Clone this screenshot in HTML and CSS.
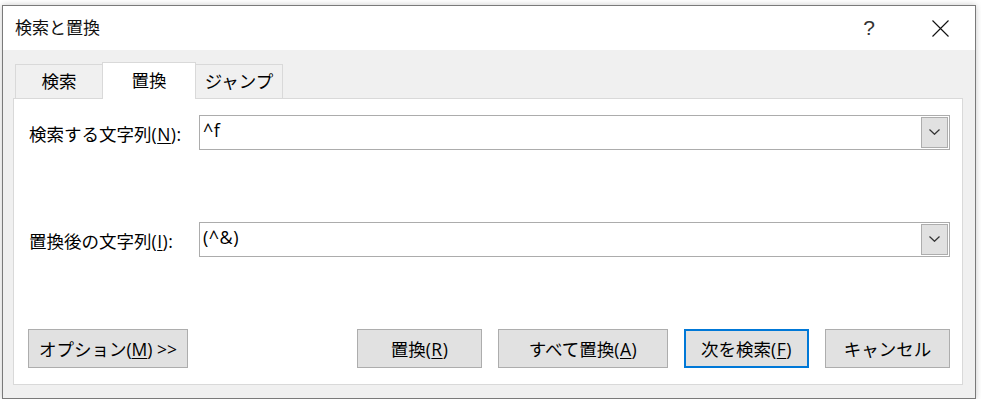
FILE: index.html
```html
<!DOCTYPE html>
<html lang="ja">
<head>
<meta charset="utf-8">
<title>検索と置換</title>
<link rel="stylesheet" href="styles.css">
</head>
<body>
<div class="window">
  <div class="titlebar">
    <span class="title">検索と置換</span>
    <span class="help">?</span>
    <span class="close"><svg width="17" height="17" viewBox="0 0 17 17"><path d="M0.5 0.5 L16.5 16.5 M16.5 0.5 L0.5 16.5" stroke="#111" stroke-width="1.1" fill="none"/></svg></span>
  </div>
  <div class="body">
    <div class="tabs">
      <div class="tab">検索</div>
      <div class="tab active">置換</div>
      <div class="tab">ジャンプ</div>
    </div>
    <div class="panel">
      <div class="row">
        <label class="label">検索する文字列<span class="lat">(<u>N</u>):</span></label>
        <div class="combo">
          <span class="value">^f</span>
          <span class="drop"><svg width="11" height="6" viewBox="0 0 11 6"><path d="M0.5 0.5 L5.5 5.3 L10.5 0.5" stroke="#333" stroke-width="1.2" fill="none"/></svg></span>
        </div>
      </div>
      <div class="row row2">
        <label class="label">置換後の文字列<span class="lat">(<u>I</u>):</span></label>
        <div class="combo">
          <span class="value">(^&amp;)</span>
          <span class="drop"><svg width="11" height="6" viewBox="0 0 11 6"><path d="M0.5 0.5 L5.5 5.3 L10.5 0.5" stroke="#333" stroke-width="1.2" fill="none"/></svg></span>
        </div>
      </div>
      <div class="buttons">
        <button class="btn opt">オプション<span class="lat">(<u>M</u>) &gt;&gt;</span></button>
        <div class="spacer"></div>
        <button class="btn">置換<span class="lat">(<u>R</u>)</span></button>
        <button class="btn wide">すべて置換<span class="lat">(<u>A</u>)</span></button>
        <button class="btn focus">次を検索<span class="lat">(<u>F</u>)</span></button>
        <button class="btn">キャンセル</button>
      </div>
    </div>
  </div>
</div>
</body>
</html>
```

FILE: styles.css
```css
html, body {
  margin: 0;
  padding: 0;
  background: #ffffff;
}
body {
  font-family: "Noto Sans CJK JP", sans-serif;
  color: #000;
  padding: 5px 0 0 2px;
}
.lat {
  font-family: "Open Sans", "Noto Sans", sans-serif;
  letter-spacing: 0.5px;
}
.window {
  box-sizing: border-box;
  width: 974px;
  height: 394px;
  border: 1px solid #7a7a7a;
  box-shadow: 0 0 6px rgba(0,0,0,0.22);
  background: #f0f0f0;
  display: flex;
  flex-direction: column;
}
.titlebar {
  height: 44px;
  background: #fff;
  display: flex;
  align-items: center;
  padding-left: 12px;
}
.title {
  font-size: 17px;
  line-height: 20px;
  flex: 1;
  margin-top: -2px;
  color: #111;
}
.help {
  font-family: "Liberation Sans", sans-serif;
  font-size: 21px;
  color: #333;
  line-height: 20px;
  margin-right: 57px;
}
.close {
  display: flex;
  width: 17px;
  height: 17px;
  margin-right: 26px;
  margin-top: 1px;
}
.body {
  flex: 1;
  padding: 12px 12px 13px 10px;
  display: flex;
  flex-direction: column;
}
.tabs {
  display: flex;
  align-items: flex-end;
  height: 36px;
  padding-left: 2px;
}
.tab {
  box-sizing: border-box;
  height: 34px;
  border: 1px solid #d9d9d9;
  border-bottom: none;
  background: #f0f0f0;
  font-size: 17.5px;
  line-height: 20px;
  display: flex;
  align-items: center;
  justify-content: center;
  padding-bottom: 1px;
}
.tab:first-child { width: 87px; border-right: none; }
.tab.active {
  position: relative;
  z-index: 1;
  width: 94px;
  height: 37px;
  margin-bottom: -1px;
  background: #fff;
  padding-bottom: 3px;
}
.tab:last-child { width: 87px; border-left: none; }
.panel {
  flex: 1;
  background: #fff;
  border: 1px solid #d9d9d9;
  padding: 16px 12px 16px 14px;
  display: flex;
  flex-direction: column;
}
.row {
  display: flex;
  align-items: center;
  height: 35px;
}
.row2 { margin-top: 72px; }
.label {
  width: 170px;
  padding-left: 1px;
  font-size: 17.5px;
  line-height: 20px;
  margin-top: 2px;
}
u { text-underline-offset: 2px; text-decoration-thickness: 1px; }
.combo {
  flex: 1;
  box-sizing: border-box;
  height: 35px;
  border: 1px solid #acacac;
  display: flex;
  align-items: stretch;
  padding: 1px;
}
.value {
  flex: 1;
  font-family: "Open Sans", "Noto Sans", sans-serif;
  font-size: 18px;
  line-height: 20px;
  padding-left: 2px;
  padding-top: 3px;
  letter-spacing: 0.5px;
}
.drop {
  box-sizing: border-box;
  width: 27px;
  border: 1px solid #adadad;
  background: #e1e1e1;
  display: flex;
  align-items: center;
  justify-content: center;
  padding-right: 1px;
  padding-bottom: 1px;
}
.buttons {
  display: flex;
  margin-top: 72px;
  gap: 16px;
}
.spacer { flex: 1; }
.btn {
  box-sizing: border-box;
  height: 39px;
  width: 125px;
  border: 1px solid #adadad;
  background: #e1e1e1;
  font-family: "Noto Sans CJK JP", sans-serif;
  font-size: 17.5px;
  line-height: 20px;
  color: #000;
  padding: 0;
  margin: 0;
}
.btn.opt { width: 160px; }
.btn.opt .lat { letter-spacing: 0; }
.btn.wide { width: 170px; }
.btn.focus { border: 2px solid #0078d7; }
```
